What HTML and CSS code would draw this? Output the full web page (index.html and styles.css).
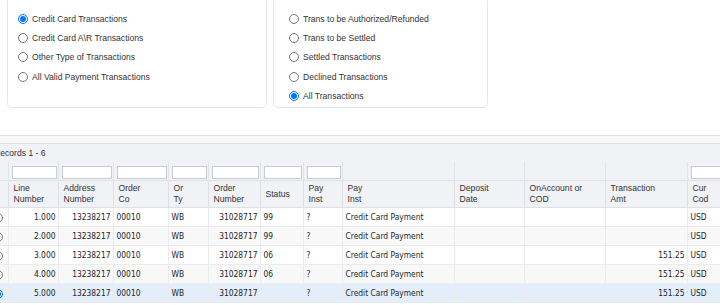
FILE: index.html
```html
<!DOCTYPE html>
<html>
<head>
    <title>Payment Transactions</title>
    <link rel="stylesheet" href="styles.css">
</head>
<body>
    <div class="filters">
        <div class="panel panel-type">
            <label class="opt"><input type="radio" name="type" checked> Credit Card Transactions</label>
            <label class="opt"><input type="radio" name="type"> Credit Card A\R Transactions</label>
            <label class="opt"><input type="radio" name="type"> Other Type of Transactions</label>
            <label class="opt"><input type="radio" name="type"> All Valid Payment Transactions</label>
        </div>
        <div class="panel panel-status">
            <label class="opt"><input type="radio" name="status"> Trans to be Authorized/Refunded</label>
            <label class="opt"><input type="radio" name="status"> Trans to be Settled</label>
            <label class="opt"><input type="radio" name="status"> Settled Transactions</label>
            <label class="opt"><input type="radio" name="status"> Declined Transactions</label>
            <label class="opt"><input type="radio" name="status" checked> All Transactions</label>
        </div>
    </div>

    <div class="grid-area">
        <div class="grid-top"></div>
        <div class="records">Records 1 - 6</div>
        <table class="grid">
            <colgroup>
                <col class="w-sel"><col class="w-line"><col class="w-addr"><col class="w-co">
                <col class="w-ty"><col class="w-ord"><col class="w-stat"><col class="w-pay">
                <col class="w-desc"><col class="w-dep"><col class="w-cod"><col class="w-amt"><col class="w-cur">
            </colgroup>
            <thead>
                <tr class="filter-row">
                    <td></td>
                    <td><input class="flt" type="text"></td>
                    <td><input class="flt" type="text"></td>
                    <td><input class="flt" type="text"></td>
                    <td><input class="flt" type="text"></td>
                    <td><input class="flt" type="text"></td>
                    <td><input class="flt" type="text"></td>
                    <td><input class="flt" type="text"></td>
                    <td></td>
                    <td></td>
                    <td></td>
                    <td></td>
                    <td><input class="flt" type="text"></td>
                </tr>
                <tr class="head-row">
                    <th></th>
                    <th>Line<br>Number</th>
                    <th>Address<br>Number</th>
                    <th>Order<br>Co</th>
                    <th>Or<br>Ty</th>
                    <th>Order<br>Number</th>
                    <th>Status</th>
                    <th>Pay<br>Inst</th>
                    <th>Pay<br>Inst</th>
                    <th>Deposit<br>Date</th>
                    <th>OnAccount or<br>COD</th>
                    <th>Transaction<br>Amt</th>
                    <th>Cur<br>Cod</th>
                </tr>
            </thead>
            <tbody>
                <tr>
                    <td class="sel"><input type="radio" name="row"></td>
                    <td class="num">1.000</td><td class="num">13238217</td><td>00010</td><td>WB</td>
                    <td class="num">31028717</td><td>99</td><td>?</td><td>Credit Card Payment</td>
                    <td></td><td></td><td class="num"></td><td>USD</td>
                </tr>
                <tr class="alt">
                    <td class="sel"><input type="radio" name="row"></td>
                    <td class="num">2.000</td><td class="num">13238217</td><td>00010</td><td>WB</td>
                    <td class="num">31028717</td><td>99</td><td>?</td><td>Credit Card Payment</td>
                    <td></td><td></td><td class="num"></td><td>USD</td>
                </tr>
                <tr>
                    <td class="sel"><input type="radio" name="row"></td>
                    <td class="num">3.000</td><td class="num">13238217</td><td>00010</td><td>WB</td>
                    <td class="num">31028717</td><td>06</td><td>?</td><td>Credit Card Payment</td>
                    <td></td><td></td><td class="num">151.25</td><td>USD</td>
                </tr>
                <tr class="alt">
                    <td class="sel"><input type="radio" name="row"></td>
                    <td class="num">4.000</td><td class="num">13238217</td><td>00010</td><td>WB</td>
                    <td class="num">31028717</td><td>06</td><td>?</td><td>Credit Card Payment</td>
                    <td></td><td></td><td class="num">151.25</td><td>USD</td>
                </tr>
                <tr class="picked">
                    <td class="sel"><input type="radio" name="row" checked></td>
                    <td class="num">5.000</td><td class="num">13238217</td><td>00010</td><td>WB</td>
                    <td class="num">31028717</td><td></td><td>?</td><td>Credit Card Payment</td>
                    <td></td><td></td><td class="num">151.25</td><td>USD</td>
                </tr>
            </tbody>
        </table>
    </div>
</body>
</html>
```

FILE: styles.css
```css
body {
    margin: 0;
    width: 720px;
    height: 305px;
    overflow: hidden;
    background: #fff;
    color: #333;
    font-family: "Liberation Sans", Arial, sans-serif;
    font-size: 8.6px;
}

/* option panels */
.filters {
    display: flex;
    gap: 6px;
    padding-left: 7px;
    margin-top: -3px;
}

.panel {
    display: flex;
    flex-direction: column;
    box-sizing: border-box;
    padding: 11px 0 2px 10px;
    border: 1px solid #e3e5e8;
    border-radius: 5px;
}

.panel-type {
    width: 260px;
}

.panel-status {
    width: 215px;
    padding-left: 15px;
}

.opt {
    display: flex;
    align-items: center;
    gap: 4px;
    height: 19.3px;
    white-space: nowrap;
}

.opt input {
    width: 10px;
    height: 10px;
    margin: 0;
}

/* grid */
.grid-area {
    margin-top: 27px;
}

.grid-top {
    height: 7px;
    border-top: 1px solid #dcdfe4;
    border-bottom: 1px solid #dcdfe4;
    background: #f6f7f9;
}

.records {
    height: 18px;
    line-height: 19px;
    margin-left: -12px;
    padding-left: 6px;
    background: #f1f2f6;
}

.grid {
    margin-left: -12px;
    width: 759px;
    table-layout: fixed;
    border-collapse: collapse;
}

.w-sel { width: 20px; }
.w-line { width: 50px; }
.w-addr { width: 55px; }
.w-co { width: 55px; }
.w-ty { width: 40px; }
.w-ord { width: 52px; }
.w-stat { width: 43px; }
.w-pay { width: 39px; }
.w-desc { width: 112px; }
.w-dep { width: 70px; }
.w-cod { width: 81px; }
.w-amt { width: 82px; }
.w-cur { width: 60px; }

.filter-row td {
    height: 18px;
    padding: 0 1px 0 3px;
    background: #f1f2f6;
    border-right: 1px solid #e1e4e9;
}

.flt {
    display: block;
    width: 100%;
    height: 13px;
    box-sizing: border-box;
    margin: 2px 0 0;
    padding: 0;
    border: 1px solid #c9ccd1;
    background: #fff;
}

.head-row th {
    height: 26px;
    padding: 0 3px 0 5px;
    background: #f1f2f6;
    color: #333;
    font-weight: normal;
    text-align: left;
    line-height: 11px;
    border: 1px solid #dde0e5;
    border-left: 0;
}

.grid tbody td {
    height: 18px;
    padding: 0 2px 0 3px;
    color: #1e1e1e;
    font-family: "DejaVu Sans Condensed", "DejaVu Sans", sans-serif;
    font-stretch: condensed;
    font-size: 8.4px;
    white-space: nowrap;
    overflow: hidden;
    border-right: 1px solid #e9ebee;
    border-bottom: 1px solid #e9ebee;
    background: #fff;
}

.grid tbody tr.alt td {
    background: #f8f8f9;
}

.grid tbody tr.picked td {
    background: #e3eefa;
}

.grid tbody td.num {
    text-align: right;
}

.grid tbody td.sel {
    padding: 0;
    text-align: center;
}

.sel input {
    width: 10px;
    height: 10px;
    margin: 0;
    vertical-align: middle;
}
```
